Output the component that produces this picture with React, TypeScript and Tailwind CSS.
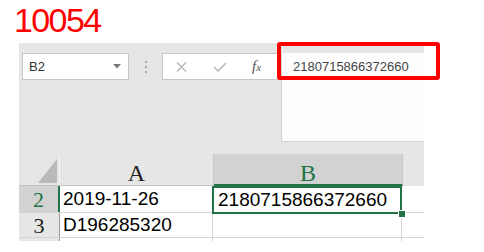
const sans = { fontFamily: '"Liberation Sans", Arial, sans-serif' };
const serif = { fontFamily: '"Liberation Serif", "Times New Roman", serif' };

const Cell = ({ w, children, className = "" }: { w: string; children?: React.ReactNode; className?: string }) => (
    <div className={`${w} shrink-0 border-r border-[#d4d4d4] bg-white pl-[3px] text-[19px] text-black flex items-center whitespace-nowrap ${className}`} style={sans}>
        {children}
    </div>
);

const App = () => {
    return (
        <div className="w-[484px] h-[252px] bg-white overflow-hidden relative">
            <div className="h-[43px] pt-[3px] pl-[14px] text-[34px] leading-[34px] tracking-[-1.6px] text-[#ff0000]" style={sans}>
                10054
            </div>

            <div className="ml-[19px] w-[405px] h-[198px] bg-[#e6e6e6] overflow-hidden">
                {/* formula bar */}
                <div className="flex items-start pt-[10px] pl-[3px]">
                    <div className="w-[107px] h-[27px] bg-white border border-[#c6c6c6] flex items-center justify-between pl-[6px] pr-[7px]">
                        <span className="text-[13px] text-[#333]" style={sans}>B2</span>
                        <svg width="8" height="5" viewBox="0 0 8 5"><path d="M0 0h8L4 4.5z" fill="#7a7a7a" /></svg>
                    </div>
                    <div className="w-[33px] h-[27px] flex flex-col items-center justify-center gap-[3px]">
                        <span className="w-[2px] h-[2px] bg-[#a8a8a8]" />
                        <span className="w-[2px] h-[2px] bg-[#a8a8a8]" />
                        <span className="w-[2px] h-[2px] bg-[#a8a8a8]" />
                    </div>
                    <div className="w-[119px] h-[27px] bg-white border-y border-l border-[#c6c6c6] flex items-center pl-[13px]">
                        <svg width="11" height="10" viewBox="0 0 11 10"><path d="M1 0.5l9 9M10 0.5l-9 9" stroke="#b5b5b5" strokeWidth="1.3" /></svg>
                        <svg className="ml-[26px]" width="14" height="10" viewBox="0 0 14 10"><path d="M1 5l4 4L13 1" stroke="#b8b8b8" strokeWidth="1.6" fill="none" /></svg>
                        <span className="ml-[25px] text-[15px] italic text-[#555]" style={serif}>f<span className="text-[11px]">x</span></span>
                    </div>
                    <div className="flex-1 h-[89px] bg-[#fdfdfd] border-l border-b border-[#d4d4d4]">
                        <div className="pl-[11px] leading-[27px] text-[13px] text-[#444]" style={sans}>2180715866372660</div>
                    </div>
                </div>

                {/* sheet */}
                <div className="mt-[12px]">
                    <div className="flex h-[32px]">
                        <div className="w-[41px] shrink-0 relative border-r border-[#f2f2f2] border-b border-b-[#c0c0c0]">
                            <svg className="absolute left-[19px] top-[5px]" width="19" height="24" viewBox="0 0 19 24"><path d="M19 0v24H0z" fill="#b9b9b9" /></svg>
                        </div>
                        <div className="w-[154px] shrink-0 text-center text-[24px] leading-[26px] pt-[6px] text-[#222] border-r border-[#c6c6c6] border-b border-b-[#c0c0c0]" style={serif}>A</div>
                        <div className="w-[189px] shrink-0 text-center text-[24px] leading-[26px] pt-[6px] text-[#217346] bg-[#d2d2d2] border-r border-[#c6c6c6] border-b-2 border-b-[#217346]" style={serif}>B</div>
                        <div className="flex-1" />
                    </div>

                    <div className="flex h-[27px] border-b border-[#d4d4d4]">
                        <div className="w-[41px] shrink-0 bg-[#d2d2d2] border-r-2 border-[#217346] text-center text-[22px] leading-[27px] text-[#217346]" style={serif}>2</div>
                        <Cell w="w-[153px]">2019-11-26</Cell>
                        <div className="w-[189px] shrink-0 relative border-r border-[#d4d4d4] bg-white">
                            <div className="absolute left-[-1px] top-0 right-[-1px] bottom-[-2px] border-2 border-[#217346] pl-[4px] flex items-center text-[19px] text-black" style={sans}>
                                2180715866372660
                            </div>
                            <div className="absolute right-[-4px] bottom-[-5px] w-[6px] h-[6px] bg-[#217346] outline outline-1 outline-white" />
                        </div>
                        <div className="flex-1 bg-white" />
                    </div>

                    <div className="flex h-[25px] border-b border-[#d4d4d4]">
                        <div className="w-[41px] shrink-0 border-r border-[#9c9c9c] text-center text-[22px] leading-[25px] text-[#222]" style={serif}>3</div>
                        <Cell w="w-[153px]">D196285320</Cell>
                        <Cell w="w-[189px]" />
                        <div className="flex-1 bg-white" />
                    </div>

                    <div className="flex h-[25px]">
                        <div className="w-[41px] shrink-0 border-r border-[#9c9c9c] text-center text-[22px] leading-[25px] text-[#222]" style={serif}>4</div>
                        <Cell w="w-[153px]" />
                        <Cell w="w-[189px]" />
                        <div className="flex-1 bg-white" />
                    </div>
                </div>
            </div>

            <div className="absolute left-[277px] top-[42px] w-[163px] h-[38px] border-4 border-[#ff0000] rounded-[3px]" />
        </div>
    );
};

export default App;
